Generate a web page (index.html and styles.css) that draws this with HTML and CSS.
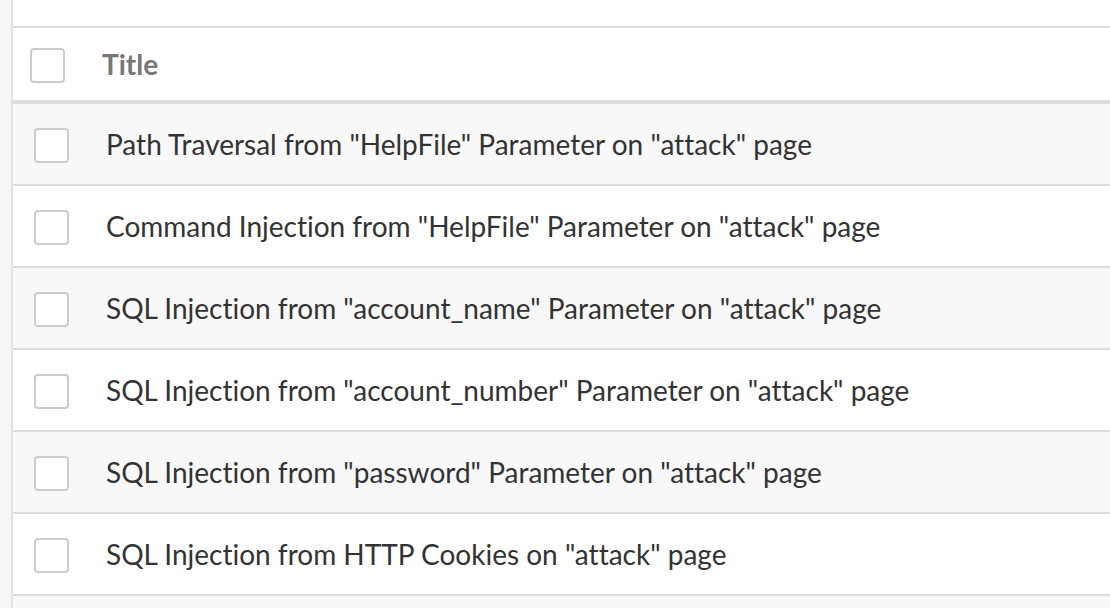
FILE: index.html
```html
<!DOCTYPE html>
<html>
<head>
<meta charset="utf-8">
<link rel="stylesheet" href="styles.css">
</head>
<body>
<div class="page">
  <div class="rail"></div>
  <div class="main">
    <div class="topspace"></div>
    <div class="table">
      <div class="head">
        <span class="cb cb-head"></span>
        <span class="title">Title</span>
      </div>
      <div class="row odd"><span class="cb"></span><span class="cell">Path Traversal from "HelpFile" Parameter on "attack" page</span></div>
      <div class="row"><span class="cb"></span><span class="cell">Command Injection from "HelpFile" Parameter on "attack" page</span></div>
      <div class="row odd"><span class="cb"></span><span class="cell">SQL Injection from "account_name" Parameter on "attack" page</span></div>
      <div class="row"><span class="cb"></span><span class="cell">SQL Injection from "account_number" Parameter on "attack" page</span></div>
      <div class="row odd"><span class="cb"></span><span class="cell">SQL Injection from "password" Parameter on "attack" page</span></div>
      <div class="row"><span class="cb"></span><span class="cell">SQL Injection from HTTP Cookies on "attack" page</span></div>
      <div class="row odd"><span class="cb"></span><span class="cell"></span></div>
    </div>
  </div>
</div>
</body>
</html>
```
FILE: styles.css
```css
html, body {
  margin: 0;
  padding: 0;
  background: #ffffff;
  height: 100%;
  overflow: hidden;
}
body {
  font-family: Lato, "Open Sans", sans-serif;
  color: #333333;
  font-variant-ligatures: none;
}
.page {
  display: flex;
  height: 608px;
  overflow: hidden;
}
.rail {
  width: 11px;
  flex: none;
  background: #f6f6f6;
  border-right: 2px solid #e2e2e2;
}
.main {
  flex: 1;
  display: flex;
  flex-direction: column;
  min-width: 0;
  overflow: hidden;
}
.topspace {
  height: 26px;
  flex: none;
}
.table {
  border-top: 2px solid #dddddd;
}
.head {
  height: 72px;
  display: flex;
  align-items: center;
  border-bottom: 4px solid #dddddd;
  box-sizing: content-box;
}
.cb {
  flex: none;
  width: 35px;
  height: 35px;
  box-sizing: border-box;
  border: 2px solid #cccccc;
  border-radius: 4px;
  background: #ffffff;
  margin-left: 21px;
  margin-top: 3px;
}
.cb-head {
  margin-left: 17px;
}
.title {
  margin-left: 37px;
  font-weight: 700;
  font-size: 28px;
  color: #777777;
}
.row {
  height: 80px;
  flex: none;
  display: flex;
  align-items: center;
  border-bottom: 2px solid #dddddd;
  box-sizing: content-box;
}
.row.odd {
  background: #f8f8f8;
}
.cell {
  margin-left: 37px;
  font-size: 28px;
  color: #333333;
}
```
